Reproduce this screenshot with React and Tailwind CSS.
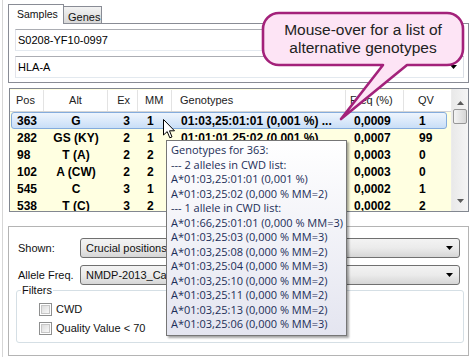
import React from 'react';

const rows = [
    { pos: '363', alt: 'G', ex: '3', mm: '1', geno: '01:03,25:01:01 (0,001 %) ...', freq: '0,0009', qv: '1', selected: true },
    { pos: '282', alt: 'GS (KY)', ex: '2', mm: '1', geno: '01:01:01,25:02 (0,001 %)', freq: '0,0007', qv: '99' },
    { pos: '98', alt: 'T (A)', ex: '2', mm: '2', geno: '', freq: '0,0003', qv: '0' },
    { pos: '102', alt: 'A (CW)', ex: '2', mm: '2', geno: '', freq: '0,0003', qv: '0' },
    { pos: '545', alt: 'C', ex: '3', mm: '1', geno: '', freq: '0,0002', qv: '1' },
    { pos: '538', alt: 'T (C)', ex: '3', mm: '2', geno: '', freq: '0,0002', qv: '2' },
];

const tipLines = [
    'Genotypes for 363:',
    '--- 2 alleles in CWD list:',
    'A*01:03,25:01:01 (0,001 %)',
    'A*01:03,25:02 (0,000 % MM=2)',
    '--- 1 allele in CWD list:',
    'A*01:66,25:01:01 (0,000 % MM=3)',
    'A*01:03,25:03 (0,000 % MM=3)',
    'A*01:03,25:08 (0,000 % MM=2)',
    'A*01:03,25:04 (0,000 % MM=3)',
    'A*01:03,25:10 (0,000 % MM=2)',
    'A*01:03,25:11 (0,000 % MM=2)',
    'A*01:03,25:13 (0,000 % MM=2)',
    'A*01:03,25:06 (0,000 % MM=3)',
];

const font = "font-['Liberation_Sans',Arial,sans-serif]";

const DownArrow = ({ className = '' }) => (
    <svg width="7" height="4" viewBox="0 0 7 4" className={className}>
        <path d="M0 0 H7 L3.5 4 Z" fill="currentColor" />
    </svg>
);

// combo text sits under the tooltip, so only the visible part is kept
const Combo = ({ text }) => (
    <div className="flex-1 h-[20px] flex items-center justify-between rounded-[3px] border border-[#707070] bg-gradient-to-b from-[#f3f3f3] via-[#ebebeb] to-[#d6d6d6] pl-[5px] pr-[6px]">
        <span className="w-[80px] overflow-hidden text-[11px] text-[#111] whitespace-nowrap">{text}</span>
        <DownArrow className="text-black" />
    </div>
);

const Checkbox = ({ label }) => (
    <div className="h-[19px] flex items-center pl-[22px] gap-[4px]">
        <div className="w-[13px] h-[13px] border border-[#8e8f8f] bg-white p-[1px]">
            <div className="w-full h-full bg-gradient-to-br from-[#dcdcdc] to-[#f8f8f8] border border-[#c6c6c6]" />
        </div>
        <span className="text-[11px] text-[#111]">{label}</span>
    </div>
);

const Row = ({ r }) => (
    <div className="relative h-[17px] flex items-center text-[12px] font-bold text-black whitespace-nowrap">
        {r.selected && (
            <div className="absolute left-[1px] right-[4px] top-0 bottom-0 rounded-[3px] border border-[#84acdd] bg-gradient-to-b from-[#eef5fd] to-[#c9def7]" />
        )}
        <div className="relative w-[34px] pl-[7px]">{r.pos}</div>
        <div className="relative w-[64px] text-center">{r.alt}</div>
        <div className="relative w-[30px] text-right pr-[8px]">{r.ex}</div>
        <div className="relative w-[34px] pl-[9px]">{r.mm}</div>
        <div className="relative w-[174px] pl-[9px] overflow-hidden">{r.geno}</div>
        <div className="relative w-[58px] pl-[8px]">{r.freq}</div>
        <div className="relative flex-1 pl-[15px]">{r.qv}</div>
    </div>
);

const App = () => {
    return (
        <div className={`relative w-[471px] h-[357px] overflow-hidden bg-white ${font}`}>
            <div className="ml-[2px] h-full border-l border-[#d6d6d6] pl-[5px] pt-[3px]">
                {/* tabs */}
                <div className="flex items-end h-[20px]">
                    <div className="relative z-10 -mb-px h-[20px] w-[56px] border border-b-0 border-[#898c95] bg-white pl-[8px] pt-[2px] text-[10.5px] text-[#111]">
                        Samples
                    </div>
                    <div className="h-[17px] w-[38px] border border-l-0 border-b-0 border-[#898c95] bg-gradient-to-b from-[#f2f2f2] to-[#d8d8d8] pl-[4px] pt-[2px] text-[11px] text-[#111]">
                        Genes
                    </div>
                </div>
                <div className="w-[461px] border border-[#898c95] pl-[6px] pr-[4px] pt-[5px] pb-[4px]">
                    <div className="h-[22px] border border-[#abadb3] border-l-[#e2e3ea] border-r-[#dbdfe6] border-b-[#e3e9ef] flex items-center pl-[2px] text-[11px] text-black">
                        S0208-YF10-0997
                    </div>
                    <div className="mt-[5px] h-[22px] border border-[#abadb3] border-l-[#e2e3ea] border-r-[#dbdfe6] border-b-[#e3e9ef] flex items-center justify-between pl-[2px] pr-[6px] text-[11px] text-black">
                        <span>HLA-A</span>
                        <DownArrow className="text-black" />
                    </div>
                </div>

                {/* grid */}
                <div className="mt-[5px] ml-px w-[460px] h-[124px] border border-[#828790] flex">
                    <div className="w-[441px] overflow-hidden bg-[#ffffe1]">
                        <div className="h-[22px] mt-px bg-white border-b border-[#d5d5d5] flex items-center text-[11px] text-[#222] whitespace-nowrap">
                            <div className="w-[34px] h-full flex items-center pl-[6px] border-r border-[#e3e3e3]">Pos</div>
                            <div className="w-[64px] h-full flex items-center justify-center border-r border-[#e3e3e3]">Alt</div>
                            <div className="w-[30px] h-full flex items-center justify-end pr-[7px] border-r border-[#e3e3e3]">Ex</div>
                            <div className="w-[34px] h-full flex items-center pl-[7px] border-r border-[#e3e3e3]">MM</div>
                            <div className="w-[174px] h-full flex items-center pl-[8px] border-r border-[#e3e3e3]">Genotypes</div>
                            <div className="w-[58px] h-full flex items-center pl-[4px] border-r border-[#e3e3e3]">Freq (%)</div>
                            <div className="flex-1 h-full flex items-center pl-[14px]">QV</div>
                        </div>
                        {rows.map((r) => (
                            <Row key={r.pos} r={r} />
                        ))}
                    </div>
                    <div className="w-[17px] flex flex-col bg-gradient-to-r from-[#e9e9e9] to-[#f5f5f5] border-l border-[#ececec]">
                        <div className="h-[20px] flex justify-center pt-[12px]">
                            <svg width="7" height="4" viewBox="0 0 7 4">
                                <path d="M0 4 H7 L3.5 0 Z" fill="#5a5a5a" />
                            </svg>
                        </div>
                        <div className="mx-px h-[15px] rounded-[2px] border border-[#979797] bg-gradient-to-r from-[#f4f4f4] to-[#d6d6d6]" />
                        <div className="flex-1" />
                        <div className="h-[16px] flex justify-center pt-[4px]">
                            <DownArrow className="text-[#5a5a5a]" />
                        </div>
                    </div>
                </div>

                {/* options panel */}
                <div className="mt-[14px] w-[461px] h-[130px] border border-[#b4b4b4] pl-[9px] pr-[8px] pt-[11px]">
                    <div className="flex items-center">
                        <div className="w-[62px] text-[11px] text-[#111]">Shown:</div>
                        <Combo text="Crucial positions (MM > 1)" />
                    </div>
                    <div className="mt-[7px] flex items-center">
                        <div className="w-[62px] text-[11px] text-[#111]">Allele Freq.</div>
                        <Combo text="NMDP-2013_Caucasian" />
                    </div>
                    <fieldset className="ml-[-2px] mr-[-4px] -mt-px h-[59px] rounded-[3px] border border-[#d5dfe5] pb-[3px]">
                        <legend className="ml-[4px] px-[1px] text-[11px] leading-[13px] text-[#111]">Filters</legend>
                        <div className="mt-[3px]">
                            <Checkbox label="CWD" />
                            <Checkbox label="Quality Value < 70" />
                        </div>
                    </fieldset>
                </div>
            </div>

            {/* tooltip */}
            <div className="absolute left-[166px] top-[140px] w-[181px] border border-[#767676] bg-gradient-to-b from-white to-[#e4e5f0] pl-[4px] pt-[2px] pb-[3px] shadow-[2px_2px_2px_rgba(0,0,0,0.35)] font-['Open_Sans',sans-serif] text-[11px] leading-[14.5px] text-[#1c2e58] whitespace-nowrap">
                {tipLines.map((l, i) => (
                    <div key={i}>{l}</div>
                ))}
            </div>

            {/* mouse cursor */}
            <svg className="absolute left-[163px] top-[119px]" width="13" height="21" viewBox="0 0 13 21">
                <path d="M0.5 0.5 V16 L4.2 12.6 L6.8 18.8 L9 17.9 L6.5 11.8 H11.5 Z" fill="white" stroke="black" strokeWidth="1" strokeLinejoin="round" />
            </svg>

            {/* callout */}
            <svg className="absolute inset-0 pointer-events-none" width="471" height="357" viewBox="0 0 471 357">
                <path
                    d="M279 13 H447 A16 16 0 0 1 463 29 V49 A16 16 0 0 1 447 65 H407 L341 119 L383 65 H279 A16 16 0 0 1 263 49 V29 A16 16 0 0 1 279 13 Z"
                    fill="#fde4f5"
                    stroke="#a3217a"
                    strokeWidth="2.6"
                    strokeLinejoin="round"
                />
            </svg>
            <div className="absolute left-[263px] top-[13px] w-[200px] h-[52px] flex flex-col items-center justify-center text-[15.5px] leading-[18px] text-[#222]">
                <span>Mouse-over for a list of</span>
                <span>alternative genotypes</span>
            </div>
        </div>
    );
};

export default App;
